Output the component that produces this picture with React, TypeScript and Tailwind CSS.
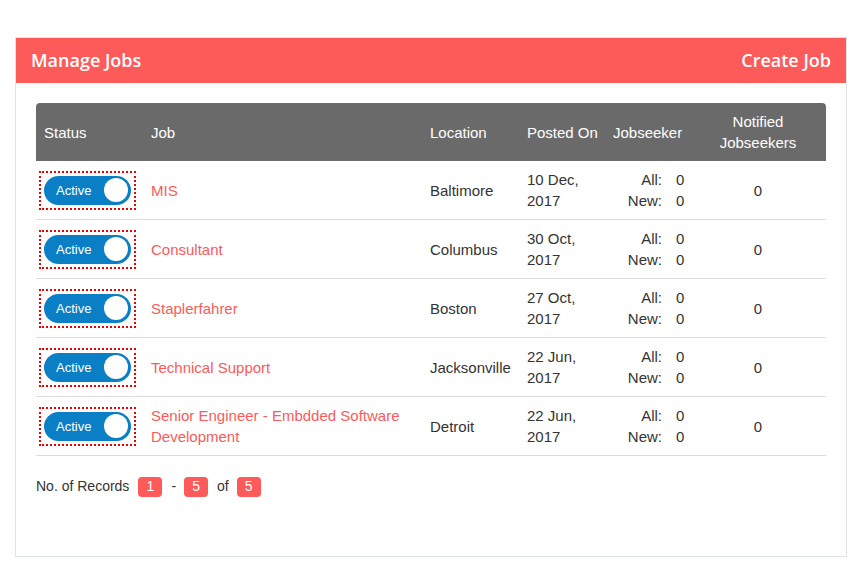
import React from "react";

interface Job {
  id: number;
  title: string;
  location: string;
  posted: string;
  all: number;
  fresh: number;
  notified: number;
}

const jobs: Job[] = [
  { id: 1, title: "MIS", location: "Baltimore", posted: "10 Dec, 2017", all: 0, fresh: 0, notified: 0 },
  { id: 2, title: "Consultant", location: "Columbus", posted: "30 Oct, 2017", all: 0, fresh: 0, notified: 0 },
  { id: 3, title: "Staplerfahrer", location: "Boston", posted: "27 Oct, 2017", all: 0, fresh: 0, notified: 0 },
  { id: 4, title: "Technical Support", location: "Jacksonville", posted: "22 Jun, 2017", all: 0, fresh: 0, notified: 0 },
  {
    id: 5,
    title: "Senior Engineer - Embdded Software Development",
    location: "Detroit",
    posted: "22 Jun, 2017",
    all: 0,
    fresh: 0,
    notified: 0,
  },
];

function StatusToggle() {
  return (
    <span className="-ml-[5px] inline-block border-2 border-dotted border-[#ee0000] p-[3px] align-middle">
      <span className="flex h-[29px] w-[87px] items-center justify-between rounded-full bg-[#0a7fc6] pl-3 pr-[3px] text-[13px] text-white">
        <span>Active</span>
        <span className="h-[24px] w-[24px] rounded-full bg-white" />
      </span>
    </span>
  );
}

function Badge({ children }: { children: React.ReactNode }) {
  return (
    <span className="inline-flex h-[20px] w-[24px] items-center justify-center rounded-[4px] bg-[#fd5a5a] text-[14px] text-white">
      {children}
    </span>
  );
}

export default function App() {
  return (
    <div className="min-h-[565px] bg-white pt-[37px] pl-[15px] pr-[10px] font-['Liberation_Sans',Arial,sans-serif] text-[#333]">
      <div className="h-[520px] border border-[#dfe3e5]">
        {/* Header */}
        <div className="flex h-[45px] items-center justify-between bg-[#fd5a5a] px-[15px] font-['Open_Sans',sans-serif] text-[18px] font-semibold text-white">
          <span>Manage Jobs</span>
          <span>Create Job</span>
        </div>

        <div className="px-[20px] pt-[20px]">
          <table className="w-full table-fixed border-collapse text-[15px] leading-[21px]">
            <thead>
              <tr className="bg-[#6a6a6a] text-white">
                <th className="w-[107px] rounded-tl-[4px] px-2 py-2 text-left font-normal">Status</th>
                <th className="w-[279px] px-2 py-2 text-left font-normal">Job</th>
                <th className="w-[97px] px-2 py-2 text-left font-normal">Location</th>
                <th className="w-[86px] whitespace-nowrap px-2 py-2 text-left font-normal">Posted On</th>
                <th className="w-[85px] px-2 py-2 text-left font-normal">Jobseeker</th>
                <th className="rounded-tr-[4px] px-2 py-2 text-center font-normal">
                  Notified
                  <br />
                  Jobseekers
                </th>
              </tr>
            </thead>
            <tbody>
              {jobs.map((job) => (
                <tr key={job.id} className="h-[58px] border-b border-[#dddddd]">
                  <td className="px-2 py-2 align-middle">
                    <StatusToggle />
                  </td>
                  <td className="px-2 py-2 align-middle text-[#fd5a5a]">{job.title}</td>
                  <td className="px-2 py-2 align-middle">{job.location}</td>
                  <td className="px-2 py-2 align-middle">{job.posted}</td>
                  <td className="px-2 py-2 align-middle">
                    <div className="grid grid-cols-[49px_auto] gap-x-[14px]">
                      <span className="text-right">All:</span>
                      <span>{job.all}</span>
                      <span className="text-right">New:</span>
                      <span>{job.fresh}</span>
                    </div>
                  </td>
                  <td className="px-2 py-2 text-center align-middle">{job.notified}</td>
                </tr>
              ))}
            </tbody>
          </table>

          <div className="mt-[20px] flex items-center text-[14px]">
            <span className="mr-[9px]">No. of Records</span>
            <Badge>1</Badge>
            <span className="ml-[9px] mr-[8px]">-</span>
            <Badge>5</Badge>
            <span className="ml-[9px] mr-[8px]">of</span>
            <Badge>5</Badge>
          </div>
        </div>
      </div>
    </div>
  );
}
